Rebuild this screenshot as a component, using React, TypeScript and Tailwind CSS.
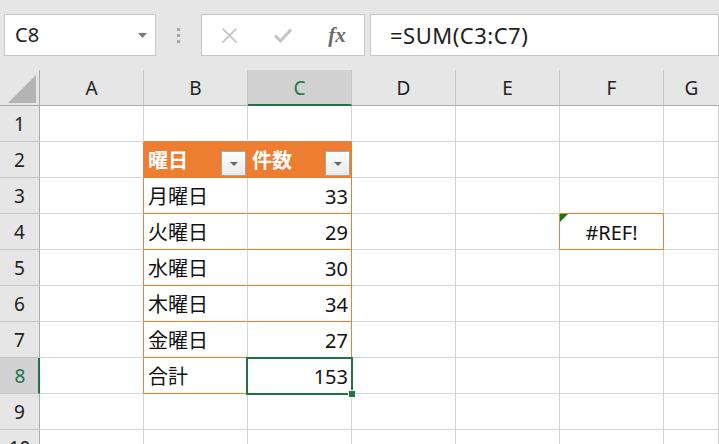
import React from "react";

const FONT = { fontFamily: '"Noto Sans", "Noto Sans CJK JP", sans-serif' };

const COLS = ["A", "B", "C", "D", "E", "F", "G"];

type CellDef = {
  text?: string;
  align?: "left" | "right" | "center";
  r?: boolean;
  b?: boolean;
  header?: boolean;
  selected?: boolean;
  errorMark?: boolean;
  dropdown?: boolean;
};

const BORDERS: Record<string, string> = {
  none: "border-r border-b border-[#d4d4d4]",
  r: "border-r border-b border-r-[#ed7d31] border-b-[#d4d4d4]",
  b: "border-r border-b border-r-[#d4d4d4] border-b-[#ed7d31]",
  rb: "border-r border-b border-[#ed7d31]",
};

function cellDef(row: number, col: number): CellDef {
  const d: CellDef = {};
  const days = ["月曜日", "火曜日", "水曜日", "木曜日", "金曜日"];
  const nums = ["33", "29", "30", "34", "27"];
  if (col === 0 && row >= 2 && row <= 8) d.r = true;
  if ((col === 1 || col === 2) && row === 1) d.b = true;
  if (col === 1 && row >= 2 && row <= 8) {
    d.b = true;
    if (row === 2) {
      d.text = "曜日";
      d.header = true;
      d.dropdown = true;
      d.r = true;
    } else if (row <= 7) {
      d.text = days[row - 3];
    } else {
      d.text = "合計";
    }
  }
  if (col === 2 && row >= 2 && row <= 8) {
    d.b = true;
    d.r = true;
    if (row === 2) {
      d.text = "件数";
      d.header = true;
      d.dropdown = true;
    } else if (row <= 7) {
      d.text = nums[row - 3];
      d.align = "right";
    } else {
      d.text = "153";
      d.align = "right";
      d.selected = true;
    }
  }
  if (col === 5 && row === 3) d.b = true;
  if (col === 4 && row === 4) d.r = true;
  if (col === 5 && row === 4) {
    d.r = true;
    d.b = true;
    d.text = "#REF!";
    d.align = "center";
    d.errorMark = true;
  }
  return d;
}

function Dropdown() {
  return (
    <div className="absolute right-[1px] top-[9px] w-[25px] h-[25px] border border-[#a6a6a6] bg-gradient-to-b from-white to-[#e9e9e9] flex items-center justify-center">
      <svg width="10" height="6" viewBox="0 0 10 6">
        <polygon points="1,1 9,1 5,5" fill="#666" />
      </svg>
    </div>
  );
}

function Cell({ row, col }: { row: number; col: number }) {
  const d = cellDef(row, col);
  const key = d.r && d.b ? "rb" : d.r ? "r" : d.b ? "b" : "none";
  const justify =
    d.align === "right"
      ? "justify-end pr-[3px]"
      : d.align === "center"
      ? "justify-center"
      : "justify-start pl-[4px]";
  return (
    <div
      className={`relative h-[36px] ${BORDERS[key]} ${
        d.header ? "bg-[#ed7d31] text-white font-bold" : "bg-white text-[#111]"
      } ${d.selected ? "z-10" : ""} flex items-center ${justify} text-[20px] leading-none whitespace-nowrap`}
    >
      <span className="relative top-[1px]">{d.text}</span>
      {d.dropdown && <Dropdown />}
      {d.errorMark && (
        <svg className="absolute left-0 top-0" width="8" height="8" viewBox="0 0 8 8">
          <polygon points="0,0 8,0 0,8" fill="#107c10" />
        </svg>
      )}
      {d.selected && (
        <>
          <div className="absolute left-[-2px] top-[-1px] right-[-2px] bottom-[-2px] border-2 border-[#217346] pointer-events-none" />
          <div className="absolute right-[-5px] bottom-[-5px] w-[8px] h-[8px] bg-[#217346] border border-white" />
        </>
      )}
    </div>
  );
}

export default function App() {
  const rows = [1, 2, 3, 4, 5, 6, 7, 8, 9, 10];
  return (
    <div className="w-[719px] h-[444px] overflow-hidden bg-white" style={FONT}>
      {/* Top bar */}
      <div className="h-[70px] bg-[#e6e6e6] flex items-start pt-[14px]">
        <div className="ml-[4px] w-[152px] h-[42px] bg-white border border-[#c6c6c6] flex items-center justify-between pl-[10px] pr-[8px]">
          <span className="text-[20px] text-[#222] leading-none">C8</span>
          <svg width="9" height="5" viewBox="0 0 9 5">
            <polygon points="0,0 9,0 4.5,5" fill="#7a7a7a" />
          </svg>
        </div>
        <div className="w-[45px] h-[42px] flex flex-col items-center justify-center gap-[3px]">
          <div className="w-[3px] h-[3px] bg-[#a6a6a6]" />
          <div className="w-[3px] h-[3px] bg-[#a6a6a6]" />
          <div className="w-[3px] h-[3px] bg-[#a6a6a6]" />
        </div>
        <div className="w-[164px] h-[42px] bg-white border border-[#c6c6c6] flex items-center">
          <div className="w-[54px] flex justify-center">
            <svg width="17" height="17" viewBox="0 0 16 16">
              <path d="M1.5 1.5 L14.5 14.5 M14.5 1.5 L1.5 14.5" stroke="#c4c4c4" strokeWidth="1.6" fill="none" />
            </svg>
          </div>
          <div className="w-[54px] flex justify-center">
            <svg width="20" height="16" viewBox="0 0 20 16">
              <path d="M2 8.5 L7.5 14 L18 2.5" stroke="#c4c4c4" strokeWidth="3" fill="none" />
            </svg>
          </div>
          <div className="w-[54px] flex justify-center">
            <span
              className="text-[21px] italic font-bold text-[#6b6b6b] leading-none"
              style={{ fontFamily: '"Liberation Serif", "DejaVu Serif", serif' }}
            >
              fx
            </span>
          </div>
        </div>
        <div className="ml-[5px] flex-1 h-[42px] bg-white border border-[#c6c6c6] flex items-center pl-[19px]">
          <span className="text-[22px] text-[#222] leading-none tracking-[0.5px]">=SUM(C3:C7)</span>
        </div>
      </div>

      {/* Grid */}
      <div className="grid grid-cols-[40px_repeat(6,104px)_1fr]">
        <div className="h-[36px] bg-[#e6e6e6] border-r border-b border-[#ababab] relative">
          <svg className="absolute left-[8px] top-[5px]" width="28" height="28" viewBox="0 0 28 28">
            <polygon points="0,28 28,0 28,28" fill="#b4b4b4" />
          </svg>
        </div>
        {COLS.map((c, i) =>
          c === "C" ? (
            <div
              key={c}
              className="h-[36px] bg-[#d2d2d2] border-r border-r-[#c6c6c6] border-b-2 border-b-[#217346] flex items-center justify-center text-[19px] text-[#217346] leading-none"
            >
              <span className="relative top-[1px]">{c}</span>
            </div>
          ) : (
            <div
              key={c}
              className={`h-[36px] bg-[#e6e6e6] ${
                i < 6 ? "border-r border-r-[#c6c6c6]" : ""
              } border-b border-b-[#ababab] flex items-center justify-center text-[19px] text-[#222] leading-none`}
            >
              <span className="relative top-[1px]">{c}</span>
            </div>
          )
        )}
        {rows.map((r) => (
          <React.Fragment key={r}>
            {r === 8 ? (
              <div className="h-[36px] bg-[#d2d2d2] border-r-2 border-r-[#217346] border-b border-b-[#c6c6c6] flex items-center justify-center text-[19px] text-[#217346] leading-none">
                <span className="relative top-[1px] left-[1px]">{r}</span>
              </div>
            ) : (
              <div className="h-[36px] bg-[#e6e6e6] border-r border-r-[#ababab] border-b border-b-[#c6c6c6] flex items-center justify-center text-[19px] text-[#222] leading-none">
                <span className="relative top-[1px]">{r}</span>
              </div>
            )}
            {COLS.map((c, ci) => (
              <Cell key={c} row={r} col={ci} />
            ))}
          </React.Fragment>
        ))}
      </div>
    </div>
  );
}
